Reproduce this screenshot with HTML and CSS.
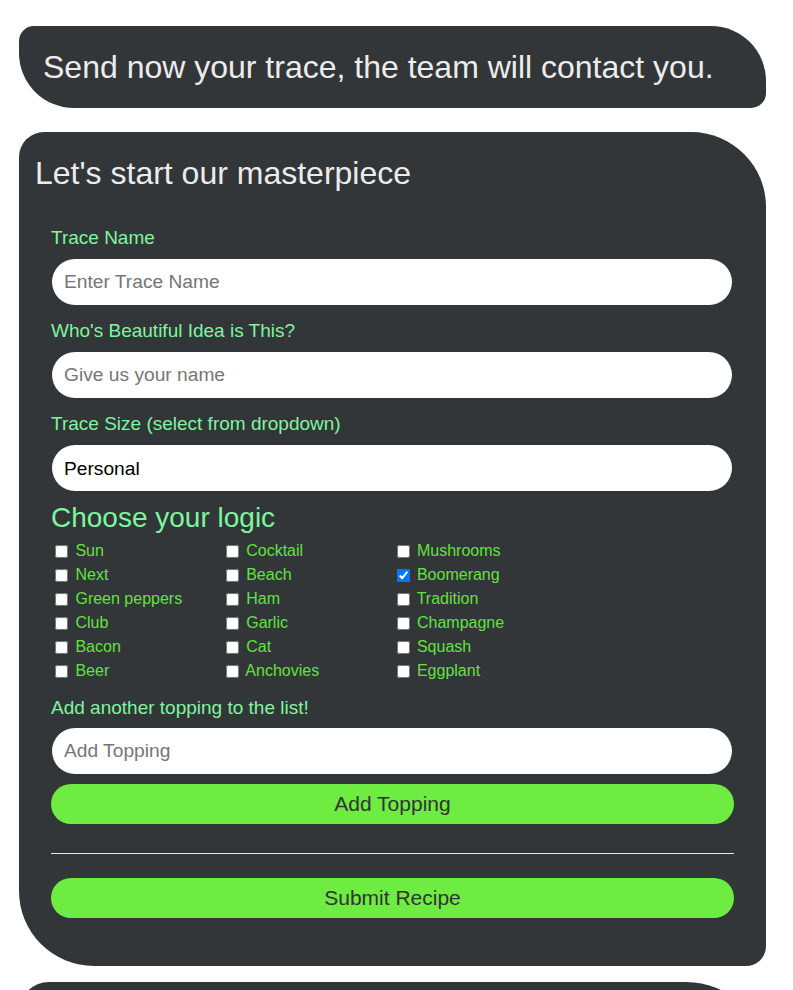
FILE: index.html
```html
<!DOCTYPE html>
<html lang="en">
<head>
<meta charset="utf-8">
<title>Trace</title>
<link rel="stylesheet" href="styles.css">
</head>
<body>
<div class="page">
  <div class="banner">Send now your trace, the team will contact you.</div>

  <div class="card">
    <h1 class="card-title">Let's start our masterpiece</h1>
    <form class="form">
      <label class="field-label" for="trace-name">Trace Name</label>
      <input class="pill-input" id="trace-name" type="text" placeholder="Enter Trace Name">

      <label class="field-label" for="author">Who's Beautiful Idea is This?</label>
      <input class="pill-input" id="author" type="text" placeholder="Give us your name">

      <label class="field-label" for="size">Trace Size (select from dropdown)</label>
      <select class="pill-input pill-select" id="size">
        <option>Personal</option>
        <option>Medium</option>
        <option>Large</option>
      </select>

      <h2 class="logic-title">Choose your logic</h2>
      <div class="checks">
        <div class="col">
          <label class="check"><input type="checkbox"> Sun</label>
          <label class="check"><input type="checkbox"> Next</label>
          <label class="check"><input type="checkbox"> Green peppers</label>
          <label class="check"><input type="checkbox"> Club</label>
          <label class="check"><input type="checkbox"> Bacon</label>
          <label class="check"><input type="checkbox"> Beer</label>
        </div>
        <div class="col">
          <label class="check"><input type="checkbox"> Cocktail</label>
          <label class="check"><input type="checkbox"> Beach</label>
          <label class="check"><input type="checkbox"> Ham</label>
          <label class="check"><input type="checkbox"> Garlic</label>
          <label class="check"><input type="checkbox"> Cat</label>
          <label class="check"><input type="checkbox"> Anchovies</label>
        </div>
        <div class="col">
          <label class="check"><input type="checkbox"> Mushrooms</label>
          <label class="check"><input type="checkbox" checked> Boomerang</label>
          <label class="check"><input type="checkbox"> Tradition</label>
          <label class="check"><input type="checkbox"> Champagne</label>
          <label class="check"><input type="checkbox"> Squash</label>
          <label class="check"><input type="checkbox"> Eggplant</label>
        </div>
      </div>

      <label class="field-label topping-label" for="topping">Add another topping to the list!</label>
      <input class="pill-input" id="topping" type="text" placeholder="Add Topping">
      <button class="pill-btn" type="button">Add Topping</button>

      <hr class="divider">

      <button class="pill-btn" type="button">Submit Recipe</button>
    </form>
  </div>

  <div class="card card-next"></div>
</div>
</body>
</html>
```

FILE: styles.css
```css
html, body {
  margin: 0;
  padding: 0;
  background: #ffffff;
}

body {
  font-family: "Liberation Sans", Arial, sans-serif;
  overflow: hidden;
}

.page {
  width: 747px;
  margin-left: 19px;
  padding-top: 26px;
  display: flex;
  flex-direction: column;
}

.banner {
  background: #323639;
  color: #ececec;
  font-size: 32px;
  padding: 23px 24px 22px;
  border-radius: 15px 55px 15px 55px;
  margin-bottom: 24px;
}

.card {
  background: #323639;
  border-radius: 25px 75px 20px 75px;
  padding: 23px 32px 48px;
}

.card-title {
  margin: 0 0 0 -16px;
  font-size: 32px;
  font-weight: normal;
  color: #ececec;
}

.form {
  display: flex;
  flex-direction: column;
  margin-top: 35px;
}

.field-label {
  color: #7ef59e;
  font-size: 19px;
  margin-bottom: 10px;
}

.pill-input {
  box-sizing: border-box;
  height: 46px;
  width: 680px;
  margin: 0 0 15px 1px;
  border: none;
  border-radius: 23px;
  background: #ffffff;
  padding: 0 12px;
  font-family: "Liberation Sans", Arial, sans-serif;
  font-size: 19.2px;
  color: #000;
  outline: none;
}

.pill-input::placeholder {
  color: #767676;
}

.pill-select {
  appearance: none;
  -webkit-appearance: none;
}

.logic-title {
  margin: -4px 0 5px;
  font-size: 28px;
  font-weight: normal;
  color: #7ef59e;
}

.checks {
  display: grid;
  grid-template-columns: repeat(4, 1fr);
  margin-bottom: 14px;
}

.col {
  display: flex;
  flex-direction: column;
}

.check {
  height: 24px;
  display: flex;
  align-items: center;
  font-size: 16px;
  color: #62e23d;
  white-space: pre;
}

.check input {
  margin: 0 3px 0 4px;
  width: 13px;
  height: 13px;
}

.topping-label {
  margin-bottom: 9px;
}

.pill-btn {
  height: 40px;
  width: 100%;
  border: none;
  border-radius: 20px;
  background: #6eec41;
  color: #333333;
  font-family: "Liberation Sans", Arial, sans-serif;
  font-size: 21px;
  margin-top: -5px;
}

.divider {
  border: none;
  border-top: 1px solid #e6e6e6;
  margin: 29px 0 24px;
  width: 100%;
}

.divider + .pill-btn {
  margin-top: 0;
}

.card-next {
  margin-top: 16px;
  height: 120px;
  padding: 0;
  border-radius: 30px 80px 20px 80px;
}
```
